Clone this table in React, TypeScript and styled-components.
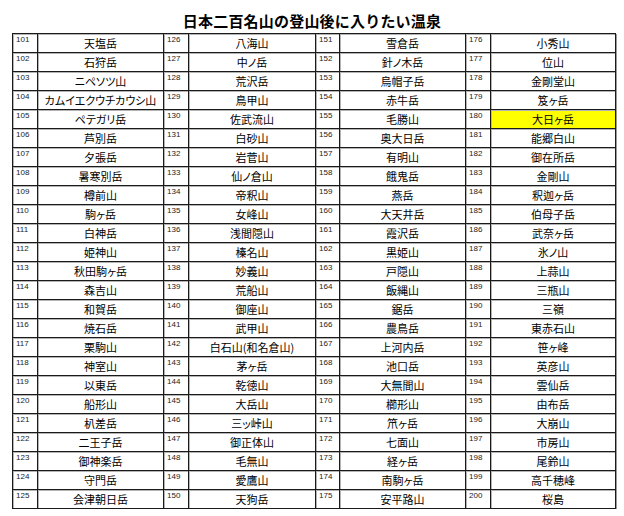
import * as React from 'react';
import styled, { createGlobalStyle } from 'styled-components';

const GlobalStyle = createGlobalStyle`
  body {
    margin: 0;
    background: #ffffff;
    font-family: "Noto Sans CJK JP", "Noto Sans", sans-serif;
    color: #000;
  }
`;

const columns: string[][] = [
  ['天塩岳', '石狩岳', 'ニペソツ山', 'カムイエクウチカウシ山', 'ペテガリ岳', '芦別岳', '夕張岳', '暑寒別岳', '樽前山', '駒ヶ岳', '白神岳', '姫神山', '秋田駒ヶ岳', '森吉山', '和賀岳', '焼石岳', '栗駒山', '神室山', '以東岳', '船形山', '朳差岳', '二王子岳', '御神楽岳', '守門岳', '会津朝日岳'],
  ['八海山', '中ノ岳', '荒沢岳', '鳥甲山', '佐武流山', '白砂山', '岩菅山', '仙ノ倉山', '帝釈山', '女峰山', '浅間隠山', '榛名山', '妙義山', '荒船山', '御座山', '武甲山', '白石山(和名倉山)', '茅ヶ岳', '乾徳山', '大岳山', '三ッ峠山', '御正体山', '毛無山', '愛鷹山', '天狗岳'],
  ['雪倉岳', '針ノ木岳', '烏帽子岳', '赤牛岳', '毛勝山', '奥大日岳', '有明山', '餓鬼岳', '燕岳', '大天井岳', '霞沢岳', '黒姫山', '戸隠山', '飯縄山', '鋸岳', '農鳥岳', '上河内岳', '池口岳', '大無間山', '櫛形山', '笊ヶ岳', '七面山', '経ヶ岳', '南駒ヶ岳', '安平路山'],
  ['小秀山', '位山', '金剛堂山', '笈ヶ岳', '大日ヶ岳', '能郷白山', '御在所岳', '金剛山', '釈迦ヶ岳', '伯母子岳', '武奈ヶ岳', '氷ノ山', '上蒜山', '三瓶山', '三嶺', '東赤石山', '笹ヶ峰', '英彦山', '雲仙岳', '由布岳', '大崩山', '市房山', '尾鈴山', '高千穂峰', '桜島'],
];

const colWidths = [25, 126, 25, 127, 24, 126, 25, 125];
const highlighted = [180];

const App = () => {
  const rows = Array.from({ length: 25 }, (_, i) => i);

  return (
    <>
      <GlobalStyle />
      <Page>
        <Title>日本二百名山の登山後に入りたい温泉</Title>
        <Table>
          <colgroup>
            {colWidths.map((w, i) => (
              <col key={i} style={{ width: w }} />
            ))}
          </colgroup>
          <tbody>
            {rows.map((r) => (
              <Row key={r}>
                {columns.map((col, c) => {
                  const num = 101 + c * 25 + r;
                  return (
                    <React.Fragment key={c}>
                      <NumCell>{num}</NumCell>
                      <NameCell $highlight={highlighted.includes(num)}>{col[r]}</NameCell>
                    </React.Fragment>
                  );
                })}
              </Row>
            ))}
          </tbody>
        </Table>
      </Page>
    </>
  );
};

export default App;

const Page = styled.div`
  width: 624px;
  display: flex;
  flex-direction: column;
`;

const Title = styled.h1`
  margin: 0;
  padding-top: 11px;
  height: 22px;
  line-height: 20px;
  font-size: 15px;
  font-weight: 700;
  text-align: center;
  letter-spacing: 0.2px;
  font-family: "Noto Sans CJK JP", sans-serif;
`;

const Table = styled.table`
  margin-left: 12px;
  width: 604px;
  table-layout: fixed;
  border-collapse: collapse;
  border: 1px solid #1a1a1a;
  box-shadow: 1px 1px 0 #9a9a9a;
`;

const Row = styled.tr`
  height: 19px;
`;

const Cell = styled.td`
  border: 1px solid #1a1a1a;
  padding: 0;
  box-shadow: inset 1px 1px 0 #b4b4b4;
  overflow: hidden;
  white-space: nowrap;
`;

const NumCell = styled(Cell)`
  font-family: "Liberation Sans", Arial, sans-serif;
  font-size: 8px;
  line-height: 10px;
  vertical-align: top;
  padding: 1px 0 0 3px;
  color: #222;
`;

const NameCell = styled(Cell)<{ $highlight?: boolean }>`
  font-size: 11px;
  line-height: 17px;
  text-align: center;
  vertical-align: middle;
  font-feature-settings: "palt";
  padding-top: 1px;
  background: ${(p) => (p.$highlight ? '#ffff00' : 'transparent')};
`;
